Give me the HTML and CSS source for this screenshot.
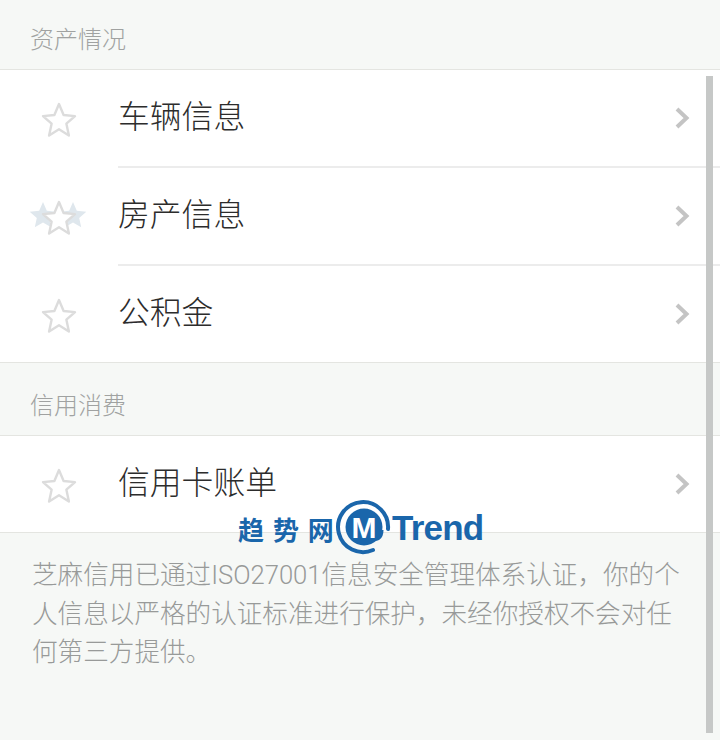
FILE: index.html
```html
<!DOCTYPE html>
<html lang="zh-CN">
<head>
    <meta charset="UTF-8">
    <meta name="viewport" content="width=device-width, initial-scale=1.0">
    <title>芝麻信用</title>
    <link rel="stylesheet" href="styles.css">
</head>
<body>
    <svg class="defs" width="0" height="0">
        <symbol id="star" viewBox="0 0 36 36">
            <path d="M18 2 22.600 13 34 14.100 25.400 21.700 27.900 33.500 18 27.300 8.100 33.500 10.600 21.700 2 14.100 13.400 13Z" fill="#fff" stroke="#dcdcdc" stroke-width="2.400" stroke-linejoin="round"/>
        </symbol>
        <symbol id="chevron" viewBox="0 0 16 24">
            <path d="M3 3 12.500 12 3 21" fill="none" stroke="#c4c4c4" stroke-width="4"/>
        </symbol>
    </svg>

    <div class="section-title first">资产情况</div>
    <div class="list">
        <div class="row">
            <div class="row-icon"><svg class="star"><use href="#star"/></svg></div>
            <div class="row-body">
                <span class="row-label">车辆信息</span>
                <svg class="chevron"><use href="#chevron"/></svg>
            </div>
        </div>
        <div class="row">
            <div class="row-icon">
                <svg class="star-back" viewBox="0 0 58 30">
                    <path d="M14 1 17.800 9.700 27.300 10.700 20.200 17 22.200 26.300 14 21.500 5.800 26.300 7.800 17 .7 10.700 10.200 9.700Z" fill="#dfe7ed"/>
                    <path d="M44 1 47.800 9.700 57.300 10.700 50.200 17 52.200 26.300 44 21.500 35.800 26.300 37.800 17 30.700 10.700 40.200 9.700Z" fill="#dfe7ed"/>
                </svg>
                <svg class="star"><use href="#star"/></svg>
            </div>
            <div class="row-body">
                <span class="row-label">房产信息</span>
                <svg class="chevron"><use href="#chevron"/></svg>
            </div>
        </div>
        <div class="row short">
            <div class="row-icon"><svg class="star"><use href="#star"/></svg></div>
            <div class="row-body">
                <span class="row-label">公积金</span>
                <svg class="chevron"><use href="#chevron"/></svg>
            </div>
        </div>
    </div>

    <div class="section-title">信用消费</div>
    <div class="list">
        <div class="row short">
            <div class="row-icon"><svg class="star"><use href="#star"/></svg></div>
            <div class="row-body">
                <span class="row-label">信用卡账单</span>
                <svg class="chevron"><use href="#chevron"/></svg>
            </div>
        </div>
    </div>

    <p class="note">芝麻信用已通过ISO27001信息安全管理体系认证，你的个人信息以严格的认证标准进行保护，未经你授权不会对任何第三方提供。</p>

    <div class="scrollbar"></div>

    <div class="watermark">
        <span class="wm-cn">趋 势 网</span>
        <svg class="wm-logo" viewBox="0 0 56 56">
            <path d="M38 50A25 25 0 1 1 53 29" fill="none" stroke="#1a66ab" stroke-width="4" stroke-linecap="round"/>
            <circle cx="29" cy="27" r="18.500" fill="#1a66ab"/>
            <path d="M47 30C47 39 41 41 38 37" fill="none" stroke="#1a66ab" stroke-width="3"/>
            <text x="29" y="38" text-anchor="middle" class="wm-m">M</text>
        </svg>
        <span class="wm-en">Trend</span>
    </div>
</body>
</html>
```
FILE: styles.css
```css
body {
    margin: 0;
    height: 740px;
    overflow: hidden;
    position: relative;
    background: #f6f8f6;
    font-family: "Noto Sans CJK SC", "Liberation Sans", sans-serif;
}
.defs {
    position: absolute;
}
.section-title {
    height: 72px;
    box-sizing: border-box;
    padding: 23px 0 0 30px;
    font-size: 24px;
    line-height: 36px;
    font-weight: 300;
    color: #a0a2a1;
}
.section-title.first {
    height: 69px;
    padding-top: 20px;
}
.list {
    background: white;
    border-top: 1px solid #e4e5e1;
    border-bottom: 1px solid #e4e5e1;
}
.row {
    display: flex;
    height: 98px;
}
.row.short {
    height: 96px;
}
.row-icon {
    position: relative;
    width: 118px;
    flex-shrink: 0;
}
.star {
    width: 36px;
    height: 36px;
    position: absolute;
    left: 41px;
    top: 32px;
}
.star-back {
    width: 58px;
    height: 30px;
    position: absolute;
    left: 29px;
    top: 33px;
}
.row-body {
    flex: 1;
    display: flex;
    align-items: center;
    justify-content: space-between;
    padding: 0 30px 0 0;
    border-bottom: 2px solid #ececec;
}
.row.short .row-body {
    border-bottom: none;
}
.row-label {
    font-size: 31.800px;
    font-weight: 300;
    color: #2c2c2c;
    line-height: 40px;
    margin-bottom: 9px;
}
.chevron {
    width: 16px;
    height: 24px;
}
.note {
    margin: 0;
    padding: 23px 30px 0 32px;
    font-family: Roboto, "Noto Sans CJK SC", sans-serif;
    font-size: 25.600px;
    font-weight: 300;
    line-height: 38.500px;
    color: #989a99;
}
.scrollbar {
    position: absolute;
    left: 706px;
    top: 76px;
    width: 7px;
    height: 657px;
    background: #c6c8c7;
}
.watermark {
    position: absolute;
    left: 238px;
    top: 500px;
    display: flex;
    align-items: center;
    color: #1a66ab;
    font-weight: bold;
}
.wm-cn {
    font-size: 26px;
    word-spacing: 3px;
    width: 97px;
    white-space: nowrap;
}
.wm-logo {
    width: 56px;
    height: 56px;
}
.wm-m {
    font-family: "Liberation Sans", sans-serif;
    font-size: 30px;
    font-weight: bold;
    fill: white;
}
.wm-en {
    font-family: "Liberation Sans", sans-serif;
    font-size: 35px;
    letter-spacing: -0.800px;
    margin-left: 1px;
}
```
